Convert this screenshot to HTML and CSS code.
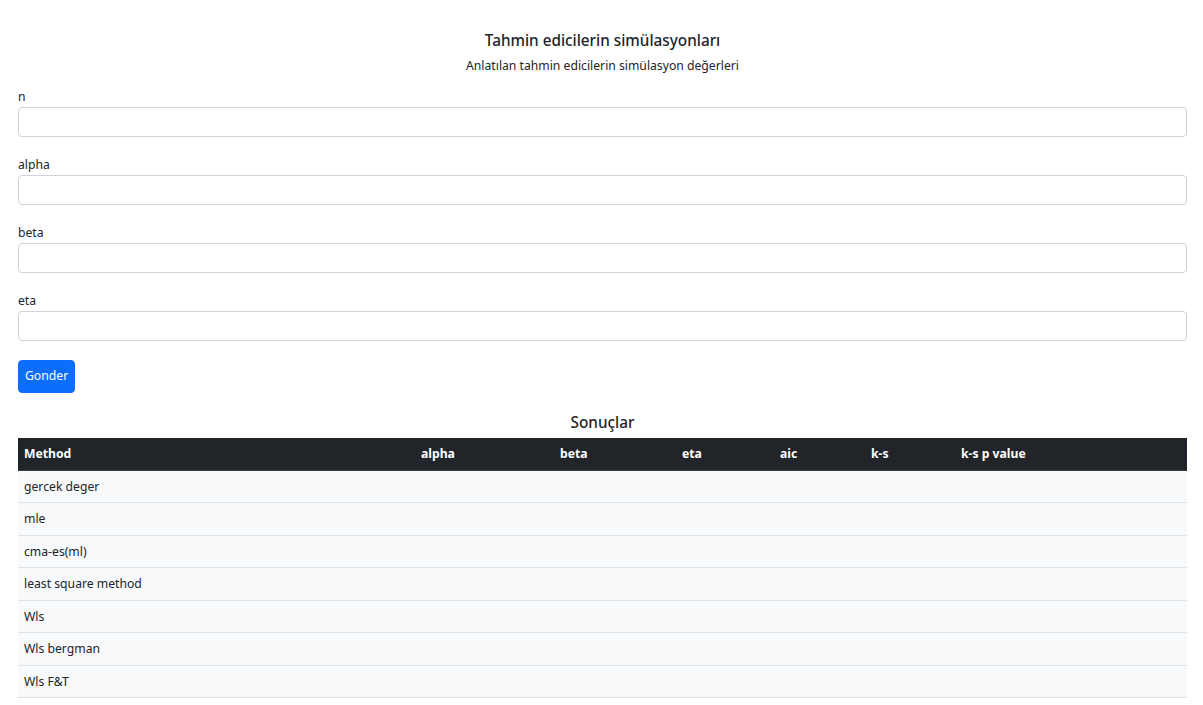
FILE: index.html
```html
<!DOCTYPE html>
<html lang="tr">
<head>
<meta charset="utf-8">
<title>Tahmin edicilerin simülasyonları</title>
<link rel="stylesheet" href="styles.css">
</head>
<body>
<div class="page">
  <header class="intro">
    <h1 class="title">Tahmin edicilerin simülasyonları</h1>
    <p class="subtitle">Anlatılan tahmin edicilerin simülasyon değerleri</p>
  </header>
  <form class="form">
    <div class="field">
      <label class="label" for="n">n</label>
      <input class="input" id="n" type="text">
    </div>
    <div class="field">
      <label class="label" for="alpha">alpha</label>
      <input class="input" id="alpha" type="text">
    </div>
    <div class="field">
      <label class="label" for="beta">beta</label>
      <input class="input" id="beta" type="text">
    </div>
    <div class="field">
      <label class="label" for="eta">eta</label>
      <input class="input" id="eta" type="text">
    </div>
    <button class="btn" type="button">Gonder</button>
  </form>
  <h2 class="results-title">Sonuçlar</h2>
  <table class="results">
    <colgroup>
      <col class="c-method"><col class="c-alpha"><col class="c-beta"><col class="c-eta"><col class="c-aic"><col class="c-ks"><col class="c-ksp">
    </colgroup>
    <thead>
      <tr><th>Method</th><th>alpha</th><th>beta</th><th>eta</th><th>aic</th><th>k-s</th><th>k-s p value</th></tr>
    </thead>
    <tbody>
      <tr><td>gercek deger</td><td></td><td></td><td></td><td></td><td></td><td></td></tr>
      <tr><td>mle</td><td></td><td></td><td></td><td></td><td></td><td></td></tr>
      <tr><td>cma-es(ml)</td><td></td><td></td><td></td><td></td><td></td><td></td></tr>
      <tr><td>least square method</td><td></td><td></td><td></td><td></td><td></td><td></td></tr>
      <tr><td>Wls</td><td></td><td></td><td></td><td></td><td></td><td></td></tr>
      <tr><td>Wls bergman</td><td></td><td></td><td></td><td></td><td></td><td></td></tr>
      <tr><td>Wls F&amp;T</td><td></td><td></td><td></td><td></td><td></td><td></td></tr>
    </tbody>
  </table>
</div>
</body>
</html>
```

FILE: styles.css
```css
* { box-sizing: border-box; }
html, body { margin: 0; padding: 0; background: #fff; }
body {
  font-family: "Noto Sans", "Open Sans", sans-serif;
  font-size: 12.2px;
  line-height: 1.5;
  color: #212529;
}
.page { padding: 30px 16px 0 18px; }
.intro { text-align: center; }
.title {
  margin: 0;
  font-size: 15.3px;
  font-weight: 500;
  line-height: 20px;
}
.subtitle {
  margin: 6px 0 0;
  font-size: 12.2px;
  line-height: 20px;
}
.form { margin-top: 11px; }
.field { margin-bottom: 18px; }
.label {
  display: block;
  line-height: 19px;
  margin-bottom: 1px;
}
.input {
  display: block;
  width: 100%;
  height: 30px;
  border: 1px solid #ced4da;
  border-radius: 4px;
  background: #fff;
  font: inherit;
  padding: 4px 10px;
}
.btn {
  display: block;
  margin-top: 19px;
  height: 33px;
  padding: 0 6px;
  border: 1px solid #0d6efd;
  border-radius: 4px;
  background: #0d6efd;
  color: #fff;
  font: inherit;
  font-size: 12.2px;
}
.results-title {
  margin: 13px 0 0;
  text-align: center;
  font-size: 15.3px;
  font-weight: 500;
  line-height: 32px;
}
.results {
  width: 100%;
  border-collapse: collapse;
  table-layout: fixed;
}
.c-method { width: 397px; }
.c-alpha { width: 139px; }
.c-beta { width: 122px; }
.c-eta { width: 98px; }
.c-aic { width: 91px; }
.c-ks { width: 90px; }
.c-ksp { width: 232px; }
.results th, .results td {
  text-align: left;
  padding: 6px 6px;
  line-height: 19px;
  height: 32.5px;
}
.results thead th {
  background: #212529;
  color: #fff;
  font-weight: 700;
  height: 32px;
  border-bottom: 1px solid #373b3e;
}
.results tbody td {
  background: #f8f9fa;
  border-bottom: 1px solid #dee2e6;
}
```
